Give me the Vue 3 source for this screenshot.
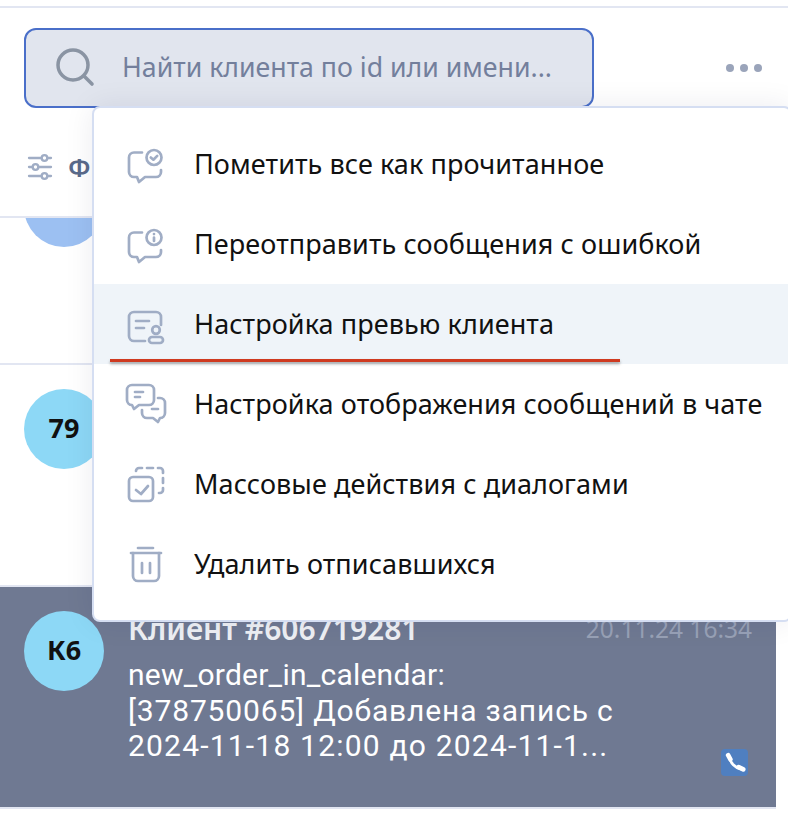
<script setup>
const rows = [
  { id: 'check', label: 'Пометить все как прочитанное', shift: 'translate(0 4)' },
  { id: 'info', label: 'Переотправить сообщения с ошибкой', shift: 'translate(0 4)' },
  { id: 'preview', label: 'Настройка превью клиента', active: true, shift: 'translate(0 6)' },
  { id: 'chat', label: 'Настройка отображения сообщений в чате', shift: 'translate(-2 0)' },
  { id: 'bulk', label: 'Массовые действия с диалогами', shift: 'translate(0 2)' },
  { id: 'trash', label: 'Удалить отписавшихся', shift: 'translate(0 2)' }
]
</script>

<template>
  <div class="page">
    <header class="head">
      <div class="search">
        <svg class="search-icon" width="40" height="40" viewBox="0 0 40 40" fill="none">
          <circle cx="17" cy="17" r="15" stroke="#8a94a3" stroke-width="3.500" />
          <path d="M28 28l8 8" stroke="#8a94a3" stroke-width="3.600" stroke-linecap="round" />
        </svg>
        <span class="placeholder">Найти клиента по id или имени...</span>
      </div>
      <div class="dots"><i></i><i></i><i></i></div>
    </header>

    <div class="filters">
      <svg width="26" height="26" viewBox="0 0 26 26" fill="none" stroke="#a0adc5" stroke-width="2.300" stroke-linecap="round">
        <path d="M2 4h12M21 4h3M2 13h3M12 13h12M2 22h12M21 22h3" />
        <circle cx="17.500" cy="4" r="2.800" />
        <circle cx="8.500" cy="13" r="2.800" />
        <circle cx="17.500" cy="22" r="2.800" />
      </svg>
      <span class="filter-label">Фильтры</span>
    </div>

    <section class="row row-a">
      <div class="avatar blue"></div>
    </section>
    <section class="row row-b">
      <div class="avatar sky">79</div>
    </section>
    <section class="row row-c">
      <div class="avatar sky">К6</div>
      <div class="body">
        <div class="title-line">
          <span class="title">Клиент #606719281</span>
          <span class="date">20.11.24 16:34</span>
        </div>
        <p class="msg">
          <span class="line l1">new_order_in_calendar:</span>
          <span class="line l2">[378750065] Добавлена запись с</span>
          <span class="line l3">2024-11-18 12:00 до 2024-11-1...</span>
        </p>
        <span class="badge">
          <svg width="22" height="22" viewBox="0 0 24 24" fill="none" stroke="#fff" stroke-linecap="round">
            <path d="M6 6c1 6 6 11 12 12.500" stroke-width="3" />
            <path d="M4.500 3.500L7 8M16 16.500l5 2.500" stroke-width="5" />
          </svg>
        </span>
      </div>
    </section>

    <nav class="menu">
      <div v-for="r in rows" :key="r.id" class="item" :class="{ active: r.active }">
        <svg class="ico" width="40" height="40" viewBox="0 0 40 40" fill="none" stroke="#a0adc5" stroke-width="2.700" stroke-linecap="round" stroke-linejoin="round">
          <g :transform="r.shift">
            <template v-if="r.id === 'check'">
              <path d="M14 4.500H6a5 5 0 0 0-5 5V24a5 5 0 0 0 5 5h3l2 5 6-5h11a5 5 0 0 0 5-5v-2" />
              <circle cx="26" cy="9.500" r="7.500" />
              <path d="M22.800 9.500l2.600 2.200 3.800-3.800" />
            </template>
            <template v-else-if="r.id === 'info'">
              <path d="M14 4.500H6a5 5 0 0 0-5 5V24a5 5 0 0 0 5 5h3l2 5 6-5h11a5 5 0 0 0 5-5v-2" />
              <circle cx="26" cy="9.500" r="7.500" />
              <path d="M26 9.500v3.500M26 6v.1" />
            </template>
            <template v-else-if="r.id === 'preview'">
              <path d="M33 15V7a5 5 0 0 0-5-5H6a5 5 0 0 0-5 5v19a5 5 0 0 0 5 5h11" />
              <path d="M8 11h13M8 18h8" />
              <circle cx="28" cy="20" r="3.800" />
              <rect x="21" y="27" width="14" height="6" rx="3" />
            </template>
            <template v-else-if="r.id === 'chat'">
              <path d="M6 1h17a5 5 0 0 1 5 5v10a5 5 0 0 1-5 5H13l-5 4-2-4a5 5 0 0 1-5-5V6a5 5 0 0 1 5-5z" />
              <path d="M9 8h8M9 13h5" />
              <path d="M32 14h2a5 5 0 0 1 5 5v10a5 5 0 0 1-5 5l-2 4-5-4h-6a5 5 0 0 1-5-5v-3" />
              <path d="M26 25h6" />
            </template>
            <template v-else-if="r.id === 'bulk'">
              <rect x="1" y="11" width="24" height="24" rx="4" />
              <path d="M8 24l5 4 7-8" />
              <path d="M8 5a3 3 0 0 1 3-3h3M19 2h6M30 2h2a3 3 0 0 1 3 3v2M35 12v5M35 22v2a3 3 0 0 1-3 3h-1" />
            </template>
            <template v-else>
              <path d="M10 2h15M3 7h30" />
              <path d="M5 7v23a5 5 0 0 0 5 5h16a5 5 0 0 0 5-5V7" />
              <path d="M14 17v10M22 17v10" />
            </template>
          </g>
        </svg>
        <span class="label">{{ r.label }}</span>
      </div>
      <div class="underline"></div>
    </nav>
  </div>
</template>

<style>
html, body { margin: 0; background: #fff; }
</style>

<style scoped>
.page {
  position: relative;
  width: 788px;
  height: 832px;
  overflow: hidden;
  background: #fff;
  font-family: "Noto Sans", "Open Sans", sans-serif;
  box-sizing: border-box;
  padding-top: 6px;
}
.head {
  display: flex;
  align-items: center;
  justify-content: space-between;
  height: 102px;
  box-sizing: border-box;
  padding: 20px 26px 0 24px;
  border-top: 2px solid #e2e6f2;
}
.search {
  width: 570px;
  height: 80px;
  box-sizing: border-box;
  display: flex;
  align-items: center;
  gap: 26px;
  padding-left: 30px;
  background: #e1e5ee;
  border: 2px solid #4a6fc9;
  border-radius: 12px;
}
.search-icon { flex: none; overflow: visible; }
.placeholder { font-size: 26.700px; color: #737f9c; white-space: nowrap; padding-bottom: 4px; }
.dots { display: flex; gap: 6px; }
.dots i { width: 8px; height: 8px; border-radius: 50%; background: #9aa4ba; }
.filters {
  height: 110px;
  box-sizing: border-box;
  display: flex;
  align-items: center;
  gap: 15px;
  padding-left: 27px;
  padding-top: 10px;
  border-bottom: 2px solid #e2e6f2;
}
.filter-label { font-size: 26px; font-weight: 600; color: #5a6a8a; }
.row {
  display: flex;
  box-sizing: border-box;
  padding-left: 24px;
  border-bottom: 2px solid #e2e6f2;
  overflow: hidden;
}
.row-a { height: 147px; }
.row-a .avatar { margin-top: -51px; }
.row-b { height: 222px; padding-top: 24px; }
.row-c {
  width: 776px;
  height: 222px;
  padding-top: 24px;
  background: #6f7992;
  gap: 24px;
}
.avatar {
  width: 80px;
  height: 80px;
  box-sizing: border-box;
  padding-bottom: 4px;
  flex: none;
  border-radius: 50%;
  display: flex;
  align-items: center;
  justify-content: center;
  font-size: 27px;
  font-weight: 700;
  color: #111;
}
.blue { background: #9cc0f2; }
.sky { background: #8dd8f6; }
.body { position: relative; flex: 1; padding-right: 24px; min-width: 0; }
.title-line {
  display: flex;
  justify-content: space-between;
  align-items: center;
  height: 40px;
  margin-top: -3px;
}
.title { font-size: 30px; font-weight: 600; color: #eef0f4; white-space: nowrap; }
.date { font-size: 24.500px; color: #98a1b6; white-space: nowrap; }
.msg {
  margin: 9px 0 0;
  font-family: Roboto, "Noto Sans", sans-serif;
  font-size: 30px;
  line-height: 35.500px;
  color: #fff;
  white-space: nowrap;
}
.line { display: block; }
.l1 { letter-spacing: 0.230px; }
.l2 { letter-spacing: 0.840px; }
.l3 { letter-spacing: 1.200px; }
.badge {
  position: absolute;
  right: 28px;
  top: 138px;
  width: 27px;
  height: 27px;
  border-radius: 4px;
  background: #4f7fc0;
  display: flex;
  align-items: center;
  justify-content: center;
}
.menu {
  position: absolute;
  left: 92px;
  top: 106px;
  width: 700px;
  height: 516px;
  box-sizing: border-box;
  padding-top: 16px;
  background: #fff;
  border: 2px solid #d5def2;
  border-radius: 8px;
  box-shadow: 0 0 30px rgba(20, 30, 60, 0.08);
}
.item {
  height: 80px;
  display: flex;
  align-items: center;
  gap: 26px;
  padding-left: 34px;
  box-sizing: border-box;
  font-size: 27px;
  letter-spacing: 0.080px;
  color: #111;
  white-space: nowrap;
}
.label { padding-bottom: 2px; }
.ico { flex: none; overflow: visible; }
.active { background: #eff4f9; }
.underline {
  position: absolute;
  left: 16px;
  top: 251px;
  width: 510px;
  height: 3px;
  background: #cf3a20;
  box-shadow: 0 2px 3px rgba(0, 0, 0, 0.35);
}
</style>
